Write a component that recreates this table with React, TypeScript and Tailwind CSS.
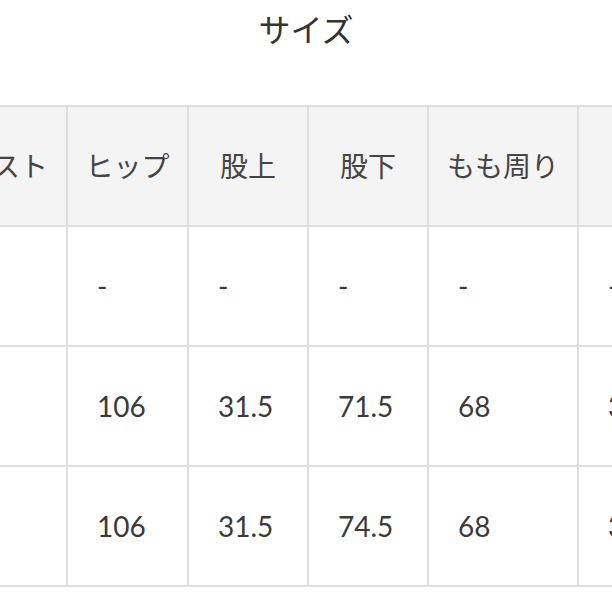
const HEADERS = ['ウエスト', 'ヒップ', '股上', '股下', 'もも周り', '裾幅'];

const ROWS = [
  ['', '-', '-', '-', '-', '-'],
  ['', '106', '31.5', '71.5', '68', '33'],
  ['', '106', '31.5', '74.5', '68', '33'],
];

export default function App() {
  return (
    <div className="w-[612px] h-[612px] overflow-hidden bg-white text-[#3a3a3a] font-['Lato','Noto_Sans_CJK_JP',sans-serif]">
      {/* Title */}
      <h2 className="pt-[10px] text-center text-[32px] leading-[40px] font-normal text-[#333]">サイズ</h2>

      {/* Size table, first column bleeds off the left edge */}
      <div className="mt-[55px] ml-[-84px] w-max grid grid-cols-[148px_119px_118px_118px_148px_148px] auto-rows-[118px] gap-[2px] border-2 border-[#dedede] bg-[#dedede]">
        {HEADERS.map((h) => (
          <div key={h} className="bg-[#f4f4f4] flex items-center justify-center text-[28px] text-[#444] whitespace-nowrap">
            {h}
          </div>
        ))}
        {ROWS.map((row, r) =>
          row.map((cell, c) => (
            <div key={`${r}-${c}`} className="bg-white flex items-center pl-[29px] text-[28px] text-[#3a3a3a]">
              {cell}
            </div>
          ))
        )}
      </div>
    </div>
  );
}
